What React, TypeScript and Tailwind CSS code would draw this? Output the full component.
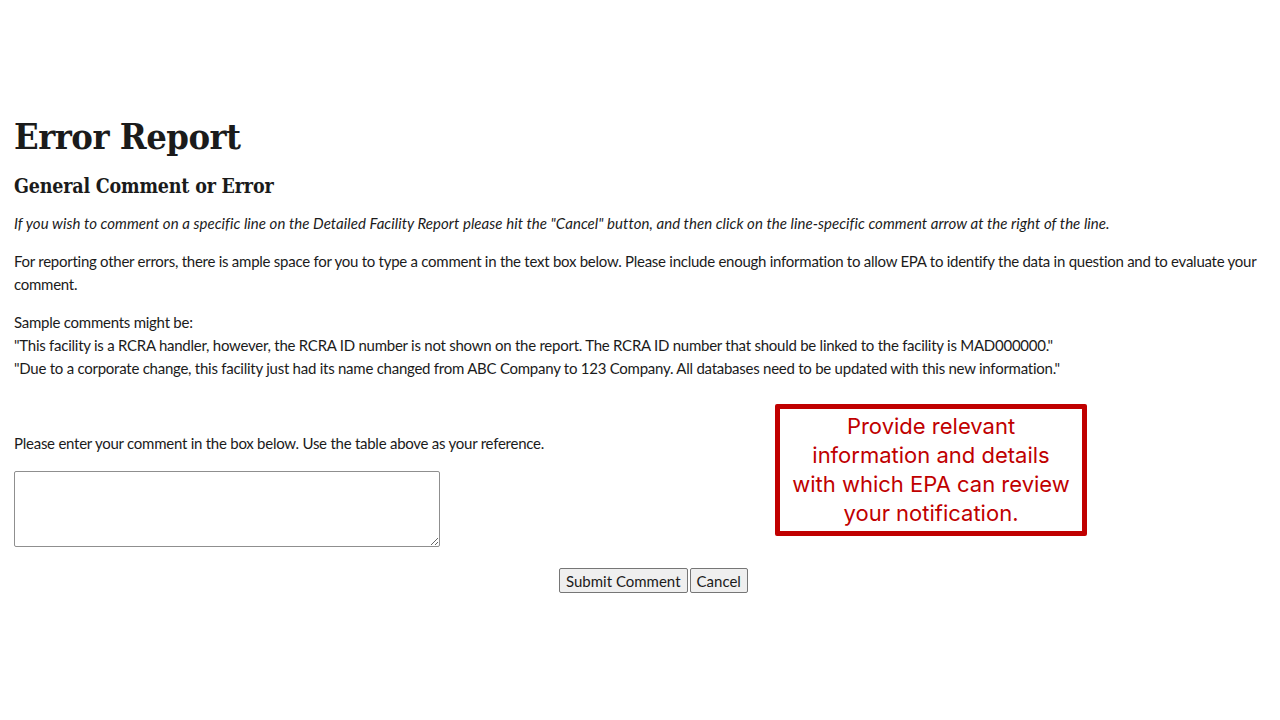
import React from "react";

export default function App() {
  const body = { fontFamily: "Lato, 'Noto Sans', sans-serif" };
  const serif = { fontFamily: "'DejaVu Serif Condensed', 'DejaVu Serif', serif" };
  return (
    <div className="relative w-[1280px] h-[720px] bg-white text-[#1b1b1b] overflow-hidden" style={body}>
      <div className="px-[14px] pt-[112px]">
        <h1 className="text-[36px] leading-[48px] font-bold tracking-[-0.5px]" style={serif}>Error Report</h1>
        <h2 className="mt-[14px] text-[19.5px] leading-[26px] font-bold tracking-[-0.2px]" style={serif}>General Comment or Error</h2>
        <p className="mt-[12px] text-[15px] leading-[23px] italic tracking-[0.05px]">
          If you wish to comment on a specific line on the Detailed Facility Report please hit the "Cancel" button, and then click on the line-specific comment arrow at the right of the line.
        </p>
        <p className="mt-[15px] text-[15px] leading-[23px] tracking-[-0.26px]">
          For reporting other errors, there is ample space for you to type a comment in the text box below. Please include enough information to allow EPA to identify the data in question and to evaluate your comment.
        </p>
        <p className="mt-[15px] text-[15px] leading-[23px] tracking-[-0.25px]">
          Sample comments might be:
          <br />
          "This facility is a RCRA handler, however, the RCRA ID number is not shown on the report. The RCRA ID number that should be linked to the facility is MAD000000."
          <br />
          "Due to a corporate change, this facility just had its name changed from ABC Company to 123 Company. All databases need to be updated with this new information."
        </p>
        <p className="mt-[52px] text-[15px] leading-[23px] tracking-[-0.25px]">
          Please enter your comment in the box below. Use the table above as your reference.
        </p>
        <textarea className="mt-[16px] block w-[426px] h-[76px] border border-[#8f8f8f] rounded-[2px] resize-y" />
        <div className="mt-[21px] flex gap-[2px] pl-[545px]">
          <button className="h-[25px] px-[6px] text-[15px] leading-[20px] bg-[#efefef] border border-[#767676] rounded-[2px]" style={body}>Submit Comment</button>
          <button className="h-[25px] px-[6px] text-[15px] leading-[20px] bg-[#efefef] border border-[#767676] rounded-[2px]" style={body}>Cancel</button>
        </div>
      </div>
      <div
        className="absolute left-[775px] top-[404px] w-[312px] h-[132px] border-[5px] border-[#c00000] rounded-[2px] bg-white flex items-center justify-center text-center text-[#c00000] text-[22px] leading-[29px]"
        style={{ fontFamily: "Inter, 'Noto Sans', sans-serif" }}
      >
        <p>
          Provide relevant
          <br />
          information and details
          <br />
          with which EPA can review
          <br />
          your notification.
        </p>
      </div>
    </div>
  );
}
